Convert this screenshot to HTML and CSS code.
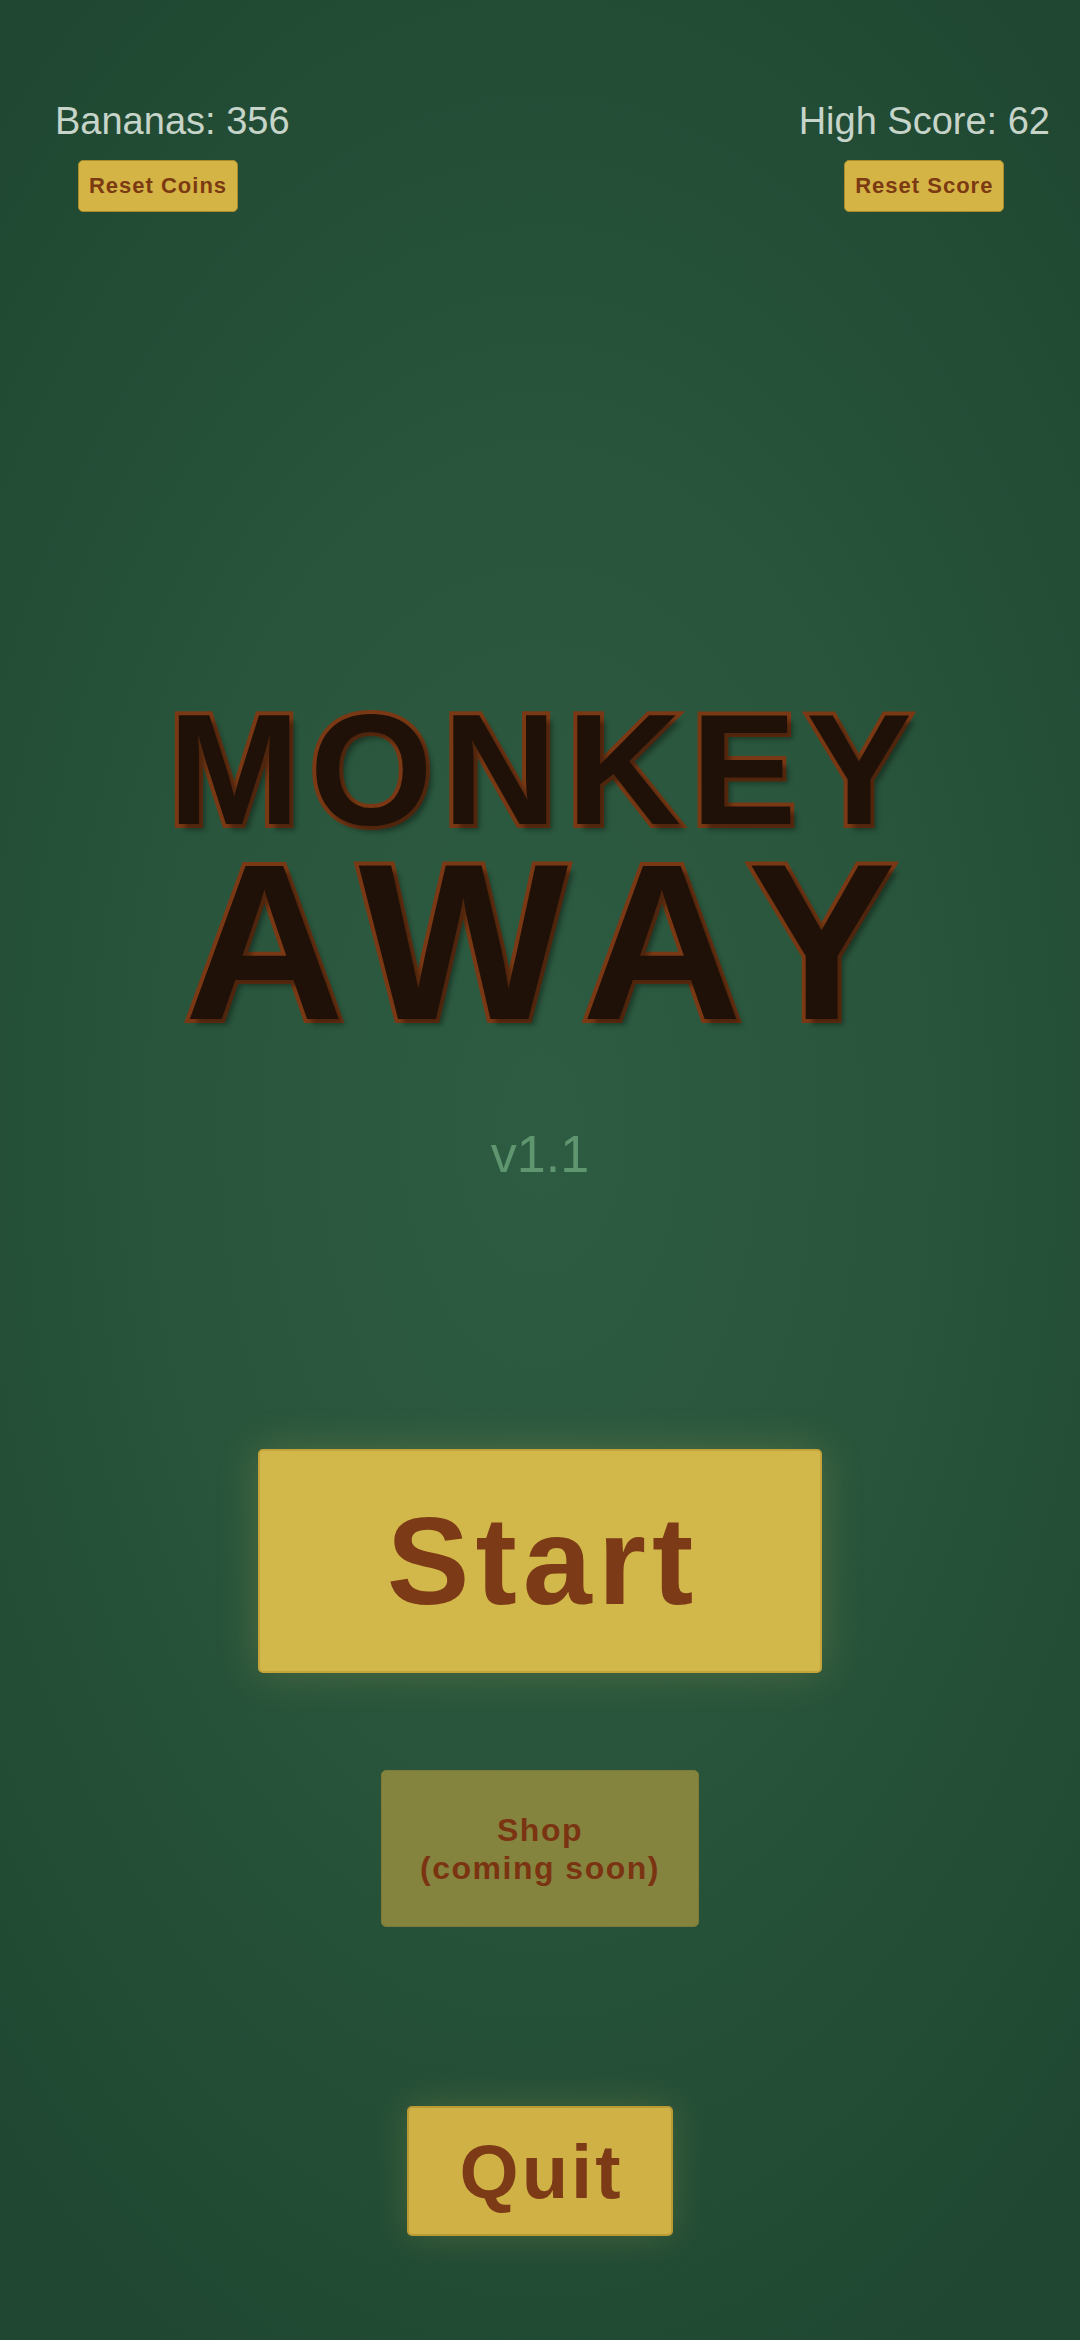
FILE: index.html
```html
<!DOCTYPE html>
<html lang="en">
<head>
    <meta charset="UTF-8">
    <meta name="viewport" content="width=device-width, initial-scale=1.0">
    <title>Monkey Away</title>
    <link rel="stylesheet" href="styles.css">
</head>
<body>
    <div class="menu">
        <div class="stats">
            <div class="stat stat-left">
                <span class="stat-label">Bananas: 356</span>
                <button class="small-btn">Reset Coins</button>
            </div>
            <div class="stat stat-right">
                <span class="stat-label">High Score: 62</span>
                <button class="small-btn">Reset Score</button>
            </div>
        </div>

        <h1 class="title">
            <span class="title-top">MONKEY</span>
            <span class="title-bottom">AWAY</span>
        </h1>

        <div class="version">v1.1</div>

        <!-- main actions -->
        <button class="menu-btn start-btn">Start</button>
        <button class="menu-btn shop-btn">Shop<br>(coming soon)</button>
        <button class="menu-btn quit-btn">Quit</button>
    </div>
</body>
</html>
```

FILE: styles.css
```css
html, body {
    margin: 0;
    padding: 0;
}
body {
    font-family: 'Liberation Sans', Arial, sans-serif;
    width: 1080px;
    height: 2340px;
    overflow: hidden;
    background: radial-gradient(ellipse 75% 60% at 50% 48%, #2d5c42 0%, #29553c 45%, #1f4731 100%);
}
.menu {
    display: flex;
    flex-direction: column;
    align-items: center;
}
.stats {
    align-self: stretch;
    display: flex;
    justify-content: space-between;
    padding: 100px 30px 0 55px;
}
.stat {
    display: flex;
    flex-direction: column;
}
.stat-left {
    align-items: flex-start;
}
.stat-left .small-btn {
    margin-left: 23px;
}
.stat-right {
    align-items: center;
}
.stat-label {
    font-size: 38px;
    color: #c6d4c9;
    margin-bottom: 17px;
}
.small-btn {
    font-family: inherit;
    width: 160px;
    height: 52px;
    padding: 0;
    font-size: 22px;
    font-weight: bold;
    letter-spacing: 1px;
    color: #7b3a12;
    background-color: #d4b445;
    border: 1px solid #a88b2b;
    border-radius: 5px;
}
.title {
    margin: 492px 0 0;
    display: flex;
    flex-direction: column;
    align-items: center;
    font-weight: bold;
    color: #1f1008;
    -webkit-text-stroke: 8px #7a3914;
    paint-order: stroke fill;
    text-shadow: 6px 6px 5px rgba(0, 0, 0, 0.35);
}
.title-top {
    font-size: 158px;
    line-height: 130px;
    letter-spacing: 10px;
    text-indent: 10px;
}
.title-bottom {
    font-size: 222px;
    line-height: 180px;
    letter-spacing: 26px;
    text-indent: 26px;
    margin-top: 18px;
}
.version {
    margin-top: 92px;
    font-size: 52px;
    color: #5f9670;
}
.menu-btn {
    font-family: inherit;
    font-weight: bold;
    color: #7c3a17;
    border-radius: 5px;
    padding: 0;
    display: flex;
    align-items: center;
    justify-content: center;
}
.start-btn {
    margin-top: 265px;
    width: 564px;
    height: 224px;
    font-size: 124px;
    letter-spacing: 6px;
    text-indent: 6px;
    background-color: #d2b84b;
    border: 2px solid #c4a43a;
    box-shadow: 0 0 40px rgba(214, 190, 80, 0.22);
}
.shop-btn {
    margin-top: 97px;
    width: 318px;
    height: 157px;
    font-size: 32px;
    line-height: 38px;
    letter-spacing: 1.5px;
    color: #7a3412;
    background-color: #85843f;
    border: 1px solid #7c7a38;
}
.quit-btn {
    margin-top: 179px;
    width: 266px;
    height: 130px;
    font-size: 76px;
    letter-spacing: 3px;
    text-indent: 3px;
    background-color: #cfb146;
    border: 2px solid #b99a35;
    box-shadow: 0 0 36px rgba(214, 190, 80, 0.2);
}
```
